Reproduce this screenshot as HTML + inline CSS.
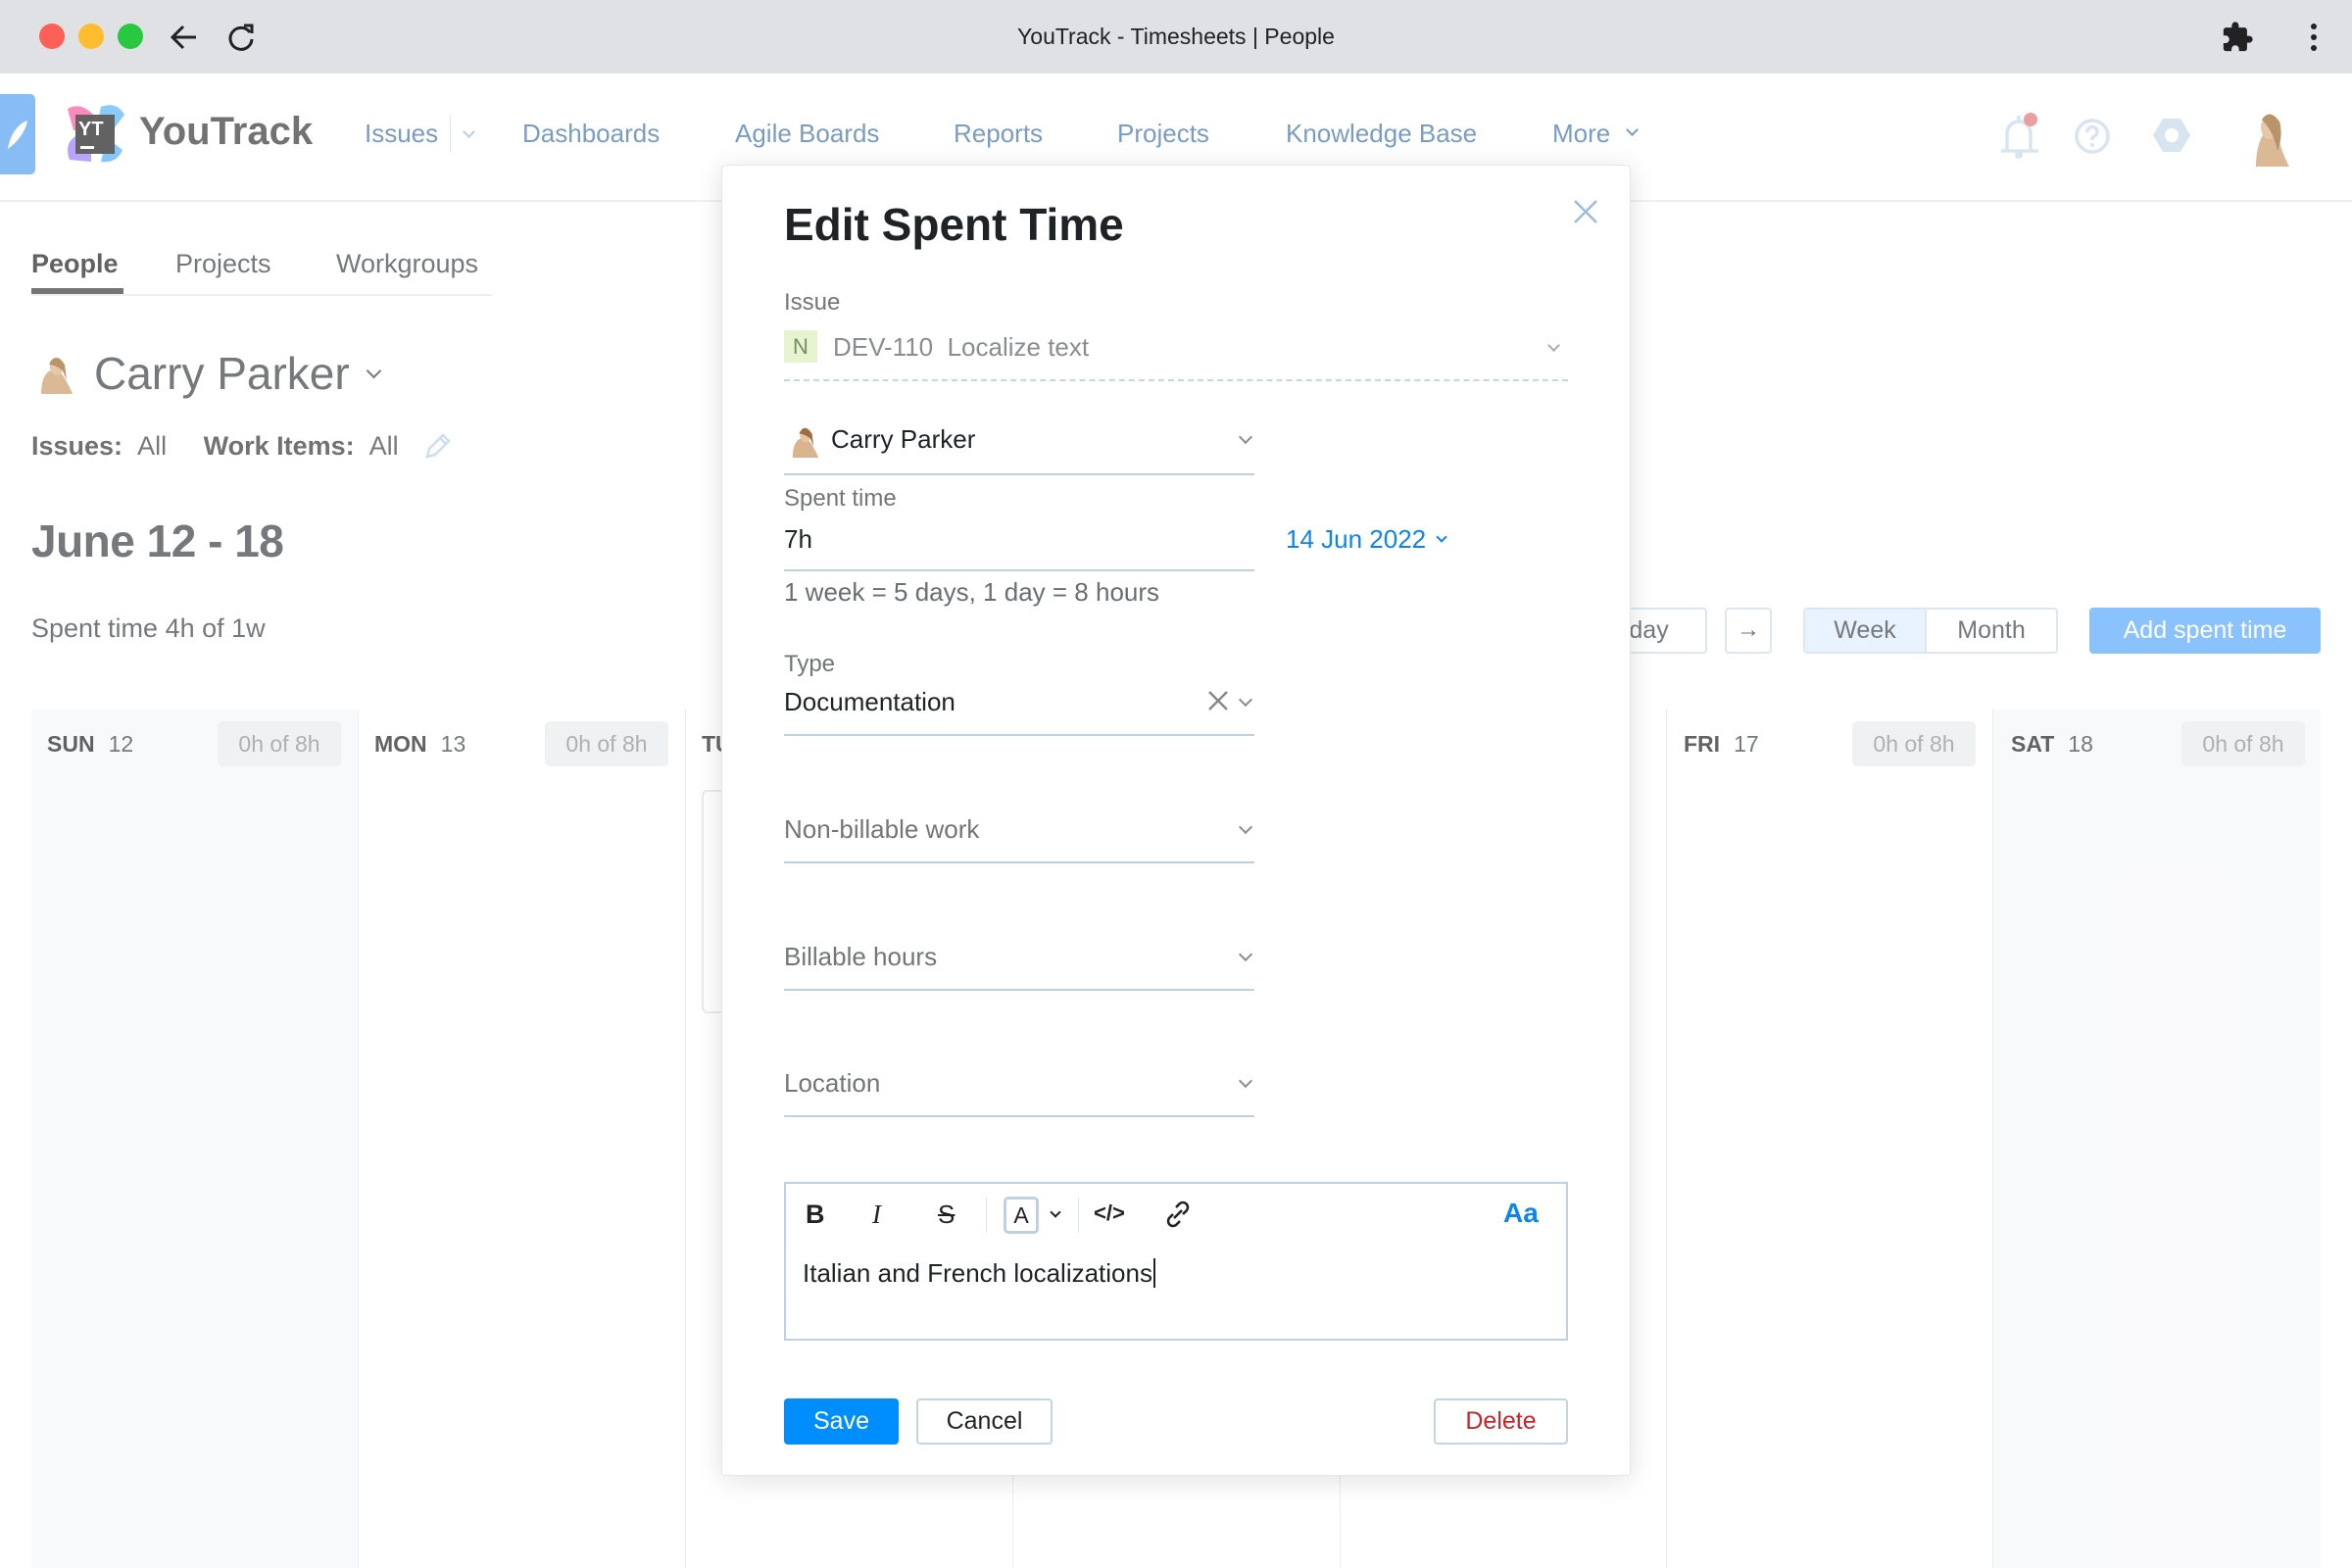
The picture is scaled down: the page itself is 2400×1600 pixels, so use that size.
<!DOCTYPE html>
<html><head><meta charset="utf-8">
<style>
*{margin:0;padding:0;box-sizing:border-box}
body{width:2400px;height:1600px;overflow:hidden;background:#fff;font-family:"Liberation Sans",sans-serif;position:relative}
.a{position:absolute;white-space:nowrap}
.nav{color:#6e94bf;font-size:26px;top:121px}
.lbl{color:#737577;font-size:24px}
.val{color:#1f2326;font-size:26px}
.ph{color:#737577;font-size:26px}
.ul{position:absolute;height:2px;background:#bcd0e6}
.chev{position:absolute;width:10px;height:10px;border-right:2px solid #8a8d90;border-bottom:2px solid #8a8d90;transform:rotate(45deg)}
.col{position:absolute;top:724px;height:876px;width:334px;border-right:1px solid #ececec}
.dh{position:absolute;top:746px;font-size:23px;color:#6b6e71}
.dh b{color:#555;margin-right:14px}
.bdg{position:absolute;top:736px;height:46px;width:126px;background:#eef0f2;border-radius:5px;color:#a8abae;font-size:23px;text-align:center;line-height:46px}
</style></head><body>
<!-- titlebar -->
<div class="a" style="left:0;top:0;width:2400px;height:75px;background:#dfe1e5"></div>
<div class="a" style="left:40px;top:24px;width:26px;height:26px;border-radius:50%;background:#fe5f57"></div>
<div class="a" style="left:80px;top:24px;width:26px;height:26px;border-radius:50%;background:#febc2e"></div>
<div class="a" style="left:120px;top:24px;width:26px;height:26px;border-radius:50%;background:#28c840"></div>
<svg class="a" style="left:172px;top:22px" width="32" height="32" viewBox="0 0 32 32"><path d="M28 16H5M15 5L4 16l11 11" stroke="#222" stroke-width="3" fill="none"/></svg>
<svg class="a" style="left:230px;top:22px" width="32" height="32" viewBox="0 0 32 32"><path d="M25 11A11 11 0 1 0 27 18" stroke="#222" stroke-width="3" fill="none"/><path d="M19 4h8v8" stroke="#222" stroke-width="3" fill="none"/></svg>
<div class="a" style="left:0;width:2400px;text-align:center;top:24px;font-size:23px;color:#222">YouTrack - Timesheets | People</div>
<svg class="a" style="left:2266px;top:21px" width="34" height="34" viewBox="0 0 24 24"><path d="M20.5 11H19V7c0-1.1-.9-2-2-2h-4V3.5a2.5 2.5 0 0 0-5 0V5H4c-1.1 0-2 .9-2 2v3.8h1.5a2.7 2.7 0 0 1 0 5.4H2V20c0 1.1.9 2 2 2h3.8v-1.5a2.7 2.7 0 0 1 5.4 0V22H17c1.1 0 2-.9 2-2v-4h1.5a2.5 2.5 0 0 0 0-5z" fill="#222"/></svg>
<div class="a" style="left:2358px;top:24px;width:6px;height:6px;border-radius:50%;background:#222;box-shadow:0 11px 0 #222,0 22px 0 #222"></div>
<!-- header -->
<div class="a" style="left:0;top:204px;width:2400px;height:2px;background:#eceef0"></div>
<div class="a" style="left:0;top:96px;width:36px;height:82px;background:#7db7f5;border-radius:0 5px 5px 0"></div>
<svg class="a" style="left:4px;top:120px" width="28" height="34" viewBox="0 0 28 34"><path d="M4 32C6 18 14 6 24 3 22 14 15 24 4 32z" fill="#fff"/></svg>
<svg class="a" style="left:63px;top:103px" width="66" height="66" viewBox="0 0 66 66"><path d="M6 8Q20 0 34 16L30 30 12 30Z" fill="#ff7eb9"/><path d="M40 6Q56 0 64 14L52 30 36 26Z" fill="#80c7ff"/><path d="M8 60Q2 44 14 36L30 40 30 62Z" fill="#b59bff"/><path d="M46 38L62 50Q56 64 40 62Z" fill="#7ac3ff"/><rect x="14" y="14" width="40" height="40" fill="#555"/><text x="17" y="35" font-size="20" font-weight="bold" fill="#fff" font-family="Liberation Sans">YT</text><rect x="19" y="46" width="14" height="3" fill="#fff"/></svg>
<div class="a" style="left:142px;top:112px;font-size:40px;font-weight:bold;color:#666">YouTrack</div>
<div class="a nav" style="left:372px">Issues</div>
<div class="a" style="left:459px;top:117px;width:1px;height:38px;background:#d6e3f0"></div>
<div class="chev" style="left:474px;top:130px;border-color:#b4c9e0;width:9px;height:9px"></div>
<div class="a nav" style="left:533px">Dashboards</div>
<div class="a nav" style="left:750px">Agile Boards</div>
<div class="a nav" style="left:973px">Reports</div>
<div class="a nav" style="left:1140px">Projects</div>
<div class="a nav" style="left:1312px">Knowledge Base</div>
<div class="a nav" style="left:1584px">More</div>
<div class="chev" style="left:1661px;top:128px;border-color:#6e94bf;width:9px;height:9px"></div>
<svg class="a" style="left:2036px;top:112px" width="50" height="52" viewBox="0 0 50 52"><path d="M12 42V24a12 12 0 0 1 12-12V6M36 24v18M24 12a12 12 0 0 1 12 12M6 42h38" stroke="#d5e3f0" stroke-width="3.5" fill="none"/><circle cx="24" cy="46" r="4" fill="#d5e3f0"/><circle cx="36" cy="10" r="7" fill="#eb9597"/></svg>
<svg class="a" style="left:2116px;top:120px" width="38" height="38" viewBox="0 0 38 38"><circle cx="19" cy="19" r="16" stroke="#d5e3f0" stroke-width="3.5" fill="none"/><path d="M14 15a5 5 0 1 1 7 4c-2 1-2 2-2 4" stroke="#d5e3f0" stroke-width="3.5" fill="none"/><circle cx="19" cy="28" r="2" fill="#d5e3f0"/></svg>
<svg class="a" style="left:2196px;top:118px" width="40" height="40" viewBox="0 0 40 40"><path d="M11 3h18l10 17-10 17H11L1 20z" fill="#d5e3f0"/><circle cx="20" cy="20" r="7" fill="#fff"/></svg>
<svg class="a" style="left:2280px;top:108px" width="60" height="62" viewBox="0 0 60 62"><path d="M22 62c0-16 4-30 10-36 6-6 14 0 14 10 2 10 6 18 10 26z" fill="#d9b48e"/><ellipse cx="36" cy="22" rx="9" ry="12" fill="#e7c3a0"/><path d="M28 14q8-12 18 2 4 14 -2 30-4-20-16-32z" fill="#b38a5e"/></svg>
<!-- left page -->
<div class="a" style="left:32px;top:254px;font-size:27px;font-weight:bold;color:#555">People</div>
<div class="a" style="left:179px;top:254px;font-size:27px;color:#6b6e71">Projects</div>
<div class="a" style="left:343px;top:254px;font-size:27px;color:#6b6e71">Workgroups</div>
<div class="a" style="left:32px;top:300px;width:470px;height:2px;background:#eceef0"></div>
<div class="a" style="left:32px;top:294px;width:94px;height:6px;background:#6a6a6a"></div>
<svg class="a" style="left:36px;top:358px" width="44" height="44" viewBox="0 0 44 44"><path d="M6 44c0-14 4-22 10-24s12 4 14 8 6 10 8 16z" fill="#d9b48e"/><ellipse cx="22" cy="16" rx="7" ry="9" fill="#e7c3a0"/><path d="M14 14q6-14 16 0l2 16-4-10q-8-6-14-6z" fill="#b38a5e"/></svg>
<div class="a" style="left:96px;top:354px;font-size:46px;color:#6b6e71">Carry Parker</div>
<div class="chev" style="left:376px;top:373px;border-color:#6b6e71;width:11px;height:11px"></div>
<div class="a" style="left:32px;top:440px;font-size:27px;color:#6b6e71"><b style="color:#666">Issues:</b>&nbsp;&nbsp;All <span style="display:inline-block;width:30px"></span><b style="color:#666">Work Items:</b>&nbsp;&nbsp;All</div>
<svg class="a" style="left:432px;top:440px" width="30" height="30" viewBox="0 0 30 30"><path d="M4 26l2-8L20 4l6 6-14 14z M17 7l6 6" stroke="#c8dcef" stroke-width="2.5" fill="none"/></svg>
<div class="a" style="left:32px;top:525px;font-size:46px;font-weight:bold;color:#6b6e71;letter-spacing:-0.5px">June 12 - 18</div>
<div class="a" style="left:32px;top:626px;font-size:27px;color:#6b6e71">Spent time 4h of 1w</div>
<!-- controls right -->
<div class="a" style="left:1600px;top:620px;width:142px;height:47px;border:2px solid #dbe5ef;border-radius:4px;font-size:25px;color:#6b6e71;line-height:43px;padding-left:34px">Today</div>
<div class="a" style="left:1760px;top:620px;width:48px;height:47px;border:2px solid #dbe5ef;border-radius:4px;font-size:24px;color:#666;text-align:center;line-height:42px">→</div>
<div class="a" style="left:1840px;top:620px;width:260px;height:47px;border:2px solid #dbe5ef;border-radius:4px"></div>
<div class="a" style="left:1842px;top:622px;width:124px;height:43px;background:#e6f2ff;border-right:2px solid #dbe5ef;font-size:25px;color:#6b6e71;text-align:center;line-height:43px">Week</div>
<div class="a" style="left:1966px;top:622px;width:132px;height:43px;font-size:25px;color:#6b6e71;text-align:center;line-height:43px">Month</div>
<div class="a" style="left:2132px;top:620px;width:236px;height:47px;background:#80bdfd;border-radius:4px;font-size:25px;color:#fff;text-align:center;line-height:47px">Add spent time</div>
<!-- calendar -->
<div class="col" style="left:32px;background:#f8f9fb"></div>
<div class="col" style="left:366px"></div>
<div class="col" style="left:700px"></div>
<div class="col" style="left:1034px"></div>
<div class="col" style="left:1367px"></div>
<div class="col" style="left:1700px"></div>
<div class="col" style="left:2034px;background:#f8f9fb;border-right:none"></div>
<div class="dh" style="left:48px"><b>SUN</b>12</div><div class="bdg" style="left:222px">0h of 8h</div>
<div class="dh" style="left:382px"><b>MON</b>13</div><div class="bdg" style="left:556px">0h of 8h</div>
<div class="dh" style="left:716px"><b>TUE</b>14</div>
<div class="bdg" style="left:1590px;width:60px"></div>
<div class="dh" style="left:1718px"><b>FRI</b>17</div><div class="bdg" style="left:1890px">0h of 8h</div>
<div class="dh" style="left:2052px"><b>SAT</b>18</div><div class="bdg" style="left:2226px">0h of 8h</div>
<div class="a" style="left:716px;top:806px;width:60px;height:228px;border:2px solid #e6e9ee;border-radius:6px;background:#fff"></div>
<!-- dim overlay -->
<div class="a" style="left:0;top:75px;width:2400px;height:1525px;background:rgba(255,255,255,0.08)"></div>
<!-- modal -->
<div class="a" style="left:736px;top:168px;width:928px;height:1338px;background:#fff;border:1px solid #e3e6ea;border-radius:4px;box-shadow:0 4px 28px rgba(0,0,0,0.12)"></div>
<div class="a" style="left:800px;top:202px;font-size:46px;font-weight:bold;color:#1f2326">Edit Spent Time</div>
<svg class="a" style="left:1605px;top:203px" width="26" height="26" viewBox="0 0 26 26"><path d="M2 2l22 22M24 2L2 24" stroke="#9dbbdc" stroke-width="2.5"/></svg>
<div class="a lbl" style="left:800px;top:295px">Issue</div>
<div class="a" style="left:800px;top:337px;width:34px;height:33px;background:#e6f5d0;color:#7a8a6a;font-size:22px;text-align:center;line-height:33px">N</div>
<div class="a" style="left:850px;top:339px;font-size:26px;color:#8a8d90">DEV-110&nbsp; Localize text</div>
<div class="chev" style="left:1581px;top:348px;border-color:#aaa;width:9px;height:9px"></div>
<div class="a" style="left:800px;top:387px;width:800px;border-top:2px dashed #c5d6e8"></div>
<svg class="a" style="left:804px;top:430px" width="36" height="38" viewBox="0 0 44 44"><path d="M6 44c0-14 4-22 10-24s12 4 14 8 6 10 8 16z" fill="#d9b48e"/><ellipse cx="22" cy="16" rx="7" ry="9" fill="#e7c3a0"/><path d="M14 14q6-14 16 0l2 16-4-10q-8-6-14-6z" fill="#9a6e44"/></svg>
<div class="a val" style="left:848px;top:433px">Carry Parker</div>
<div class="chev" style="left:1266px;top:441px"></div>
<div class="ul" style="left:800px;top:483px;width:480px"></div>
<div class="a lbl" style="left:800px;top:495px">Spent time</div>
<div class="a val" style="left:800px;top:535px">7h</div>
<div class="ul" style="left:800px;top:581px;width:480px"></div>
<div class="a" style="left:1312px;top:535px;font-size:26px;color:#0a85f2">14 Jun 2022</div>
<div class="chev" style="left:1467px;top:544px;border-color:#0a85f2;width:8px;height:8px"></div>
<div class="a" style="left:800px;top:589px;font-size:26px;color:#6b6e71">1 week = 5 days, 1 day = 8 hours</div>
<div class="a lbl" style="left:800px;top:664px">Type</div>
<div class="a val" style="left:800px;top:701px">Documentation</div>
<svg class="a" style="left:1232px;top:704px" width="22" height="22" viewBox="0 0 22 22"><path d="M2 2l18 18M20 2L2 20" stroke="#888" stroke-width="2.5"/></svg>
<div class="chev" style="left:1266px;top:709px"></div>
<div class="ul" style="left:800px;top:749px;width:480px"></div>
<div class="a ph" style="left:800px;top:831px">Non-billable work</div>
<div class="chev" style="left:1266px;top:839px"></div>
<div class="ul" style="left:800px;top:879px;width:480px"></div>
<div class="a ph" style="left:800px;top:961px">Billable hours</div>
<div class="chev" style="left:1266px;top:969px"></div>
<div class="ul" style="left:800px;top:1009px;width:480px"></div>
<div class="a ph" style="left:800px;top:1090px">Location</div>
<div class="chev" style="left:1266px;top:1098px"></div>
<div class="ul" style="left:800px;top:1138px;width:480px"></div>
<!-- editor -->
<div class="a" style="left:800px;top:1206px;width:800px;height:162px;border:2px solid #bcd0e6"></div>
<div class="a" style="left:822px;top:1224px;font-size:27px;font-weight:bold;color:#222">B</div>
<div class="a" style="left:890px;top:1224px;font-size:27px;font-style:italic;font-family:'Liberation Serif',serif;color:#222">I</div>
<div class="a" style="left:957px;top:1224px;font-size:26px;text-decoration:line-through;color:#222">S</div>
<div class="a" style="left:1006px;top:1222px;width:1px;height:36px;background:#dde5ee"></div>
<div class="a" style="left:1024px;top:1221px;width:36px;height:38px;border:3px solid #bcd0e6;border-radius:5px;font-size:23px;color:#222;text-align:center;line-height:32px">A</div>
<div class="chev" style="left:1073px;top:1233px;border-color:#222;width:8px;height:8px"></div>
<div class="a" style="left:1100px;top:1222px;width:1px;height:36px;background:#dde5ee"></div>
<div class="a" style="left:1116px;top:1225px;font-size:22px;font-weight:bold;color:#222">&lt;/&gt;</div>
<svg class="a" style="left:1186px;top:1222px" width="32" height="34" viewBox="0 0 32 34"><path d="M14 10l4-4a5 5 0 0 1 7 7l-4 4M18 24l-4 4a5 5 0 0 1-7-7l4-4M12 21l8-8" stroke="#222" stroke-width="2.6" fill="none"/></svg>
<div class="a" style="left:1534px;top:1222px;font-size:28px;font-weight:bold;color:#0a85f2">Aa</div>
<div class="a" style="left:819px;top:1284px;font-size:26px;color:#1f2326">Italian and French localizations<span style="border-left:2px solid #222;margin-left:1px"></span></div>
<!-- buttons -->
<div class="a" style="left:800px;top:1427px;width:117px;height:47px;background:#008eff;border-radius:4px;color:#fff;font-size:25px;text-align:center;line-height:47px">Save</div>
<div class="a" style="left:935px;top:1427px;width:139px;height:47px;border:2px solid #c3d4e7;border-radius:4px;color:#1f2326;font-size:25px;text-align:center;line-height:43px">Cancel</div>
<div class="a" style="left:1463px;top:1427px;width:137px;height:47px;border:2px solid #c3d4e7;border-radius:4px;color:#d0202a;font-size:25px;text-align:center;line-height:43px">Delete</div>
</body></html>
